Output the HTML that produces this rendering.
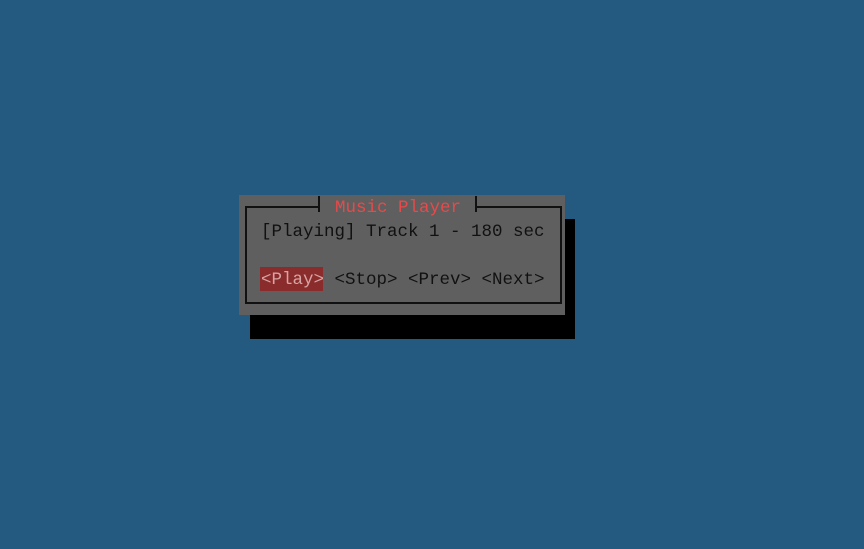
<!DOCTYPE html>
<html><head><style>
html,body{margin:0;padding:0;}
body{width:864px;height:549px;background:#245a80;position:relative;overflow:hidden;font-family:"Liberation Mono","DejaVu Sans Mono",monospace;}
.a{position:absolute;}
.t{position:absolute;font-size:17.5px;line-height:24px;white-space:pre;color:#111;}
</style></head><body>
<div class="a" style="left:250px;top:219px;width:325px;height:120px;background:#000"></div>
<div class="a" style="left:239px;top:195px;width:326px;height:120px;background:#5f5f5f"></div>
<div class="a" style="left:245px;top:206px;width:313px;height:94px;border:2px solid #111"></div>
<div class="a" style="left:318px;top:196px;width:2px;height:16px;background:#111"></div>
<div class="a" style="left:475px;top:196px;width:2px;height:16px;background:#111"></div>
<div class="a" style="left:320px;top:200px;width:155px;height:12px;background:#5f5f5f"></div>
<div class="t" style="left:335px;top:196px;color:#e8494a">Music Player</div>
<div class="t" style="left:261px;top:220px">[Playing] Track 1 - 180 sec</div>
<div class="a" style="left:260px;top:267px;width:63px;height:24px;background:#8b2c2c"></div>
<div class="t" style="left:261px;top:268px"><span style="color:#d7a3a3">&lt;Play&gt;</span> &lt;Stop&gt; &lt;Prev&gt; &lt;Next&gt;</div>
</body></html>
